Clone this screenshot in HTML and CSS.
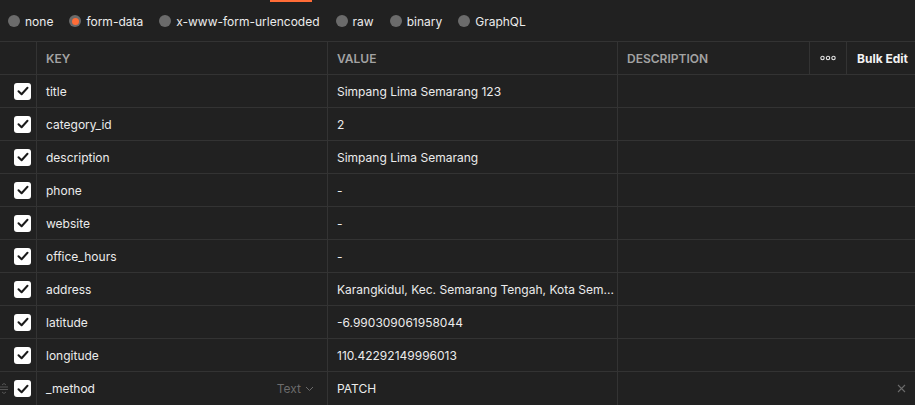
FILE: index.html
```html
<!DOCTYPE html>
<html>
<head>
<meta charset="utf-8">
<link rel="stylesheet" href="styles.css">
</head>
<body>
<div class="page">
  <div class="tabbar"><span class="tab-indicator"></span></div>
  <div class="radios">
    <label class="radio"><span class="dot"></span>none</label>
    <label class="radio"><span class="dot on"></span>form-data</label>
    <label class="radio"><span class="dot"></span>x-www-form-urlencoded</label>
    <label class="radio"><span class="dot"></span>raw</label>
    <label class="radio"><span class="dot"></span>binary</label>
    <label class="radio"><span class="dot"></span>GraphQL</label>
  </div>
  <div class="table">
    <div class="row head">
      <div class="cell chk"></div>
      <div class="cell key">KEY</div>
      <div class="cell val">VALUE</div>
      <div class="cell desc">DESCRIPTION</div>
      <div class="cell more"><svg width="16" height="6" viewBox="0 0 16 6"><circle cx="2.5" cy="3" r="1.7" fill="none" stroke="#e6e6e6" stroke-width="1.1"/><circle cx="8" cy="3" r="1.7" fill="none" stroke="#e6e6e6" stroke-width="1.1"/><circle cx="13.5" cy="3" r="1.7" fill="none" stroke="#e6e6e6" stroke-width="1.1"/></svg></div>
      <div class="cell bulk">Bulk Edit</div>
    </div>
    <div class="row"><div class="cell chk"><span class="box"><svg width="12" height="10" viewBox="0 0 12 10"><path d="M1.5 5.2 L4.6 8.2 L10.5 1.8" fill="none" stroke="#1a1a1a" stroke-width="2" stroke-linecap="round" stroke-linejoin="round"/></svg></span></div><div class="cell key">title</div><div class="cell val">Simpang Lima Semarang 123</div><div class="cell dspan"></div></div>
    <div class="row"><div class="cell chk"><span class="box"><svg width="12" height="10" viewBox="0 0 12 10"><path d="M1.5 5.2 L4.6 8.2 L10.5 1.8" fill="none" stroke="#1a1a1a" stroke-width="2" stroke-linecap="round" stroke-linejoin="round"/></svg></span></div><div class="cell key">category_id</div><div class="cell val">2</div><div class="cell dspan"></div></div>
    <div class="row"><div class="cell chk"><span class="box"><svg width="12" height="10" viewBox="0 0 12 10"><path d="M1.5 5.2 L4.6 8.2 L10.5 1.8" fill="none" stroke="#1a1a1a" stroke-width="2" stroke-linecap="round" stroke-linejoin="round"/></svg></span></div><div class="cell key">description</div><div class="cell val">Simpang Lima Semarang</div><div class="cell dspan"></div></div>
    <div class="row"><div class="cell chk"><span class="box"><svg width="12" height="10" viewBox="0 0 12 10"><path d="M1.5 5.2 L4.6 8.2 L10.5 1.8" fill="none" stroke="#1a1a1a" stroke-width="2" stroke-linecap="round" stroke-linejoin="round"/></svg></span></div><div class="cell key">phone</div><div class="cell val">-</div><div class="cell dspan"></div></div>
    <div class="row"><div class="cell chk"><span class="box"><svg width="12" height="10" viewBox="0 0 12 10"><path d="M1.5 5.2 L4.6 8.2 L10.5 1.8" fill="none" stroke="#1a1a1a" stroke-width="2" stroke-linecap="round" stroke-linejoin="round"/></svg></span></div><div class="cell key">website</div><div class="cell val">-</div><div class="cell dspan"></div></div>
    <div class="row"><div class="cell chk"><span class="box"><svg width="12" height="10" viewBox="0 0 12 10"><path d="M1.5 5.2 L4.6 8.2 L10.5 1.8" fill="none" stroke="#1a1a1a" stroke-width="2" stroke-linecap="round" stroke-linejoin="round"/></svg></span></div><div class="cell key">office_hours</div><div class="cell val">-</div><div class="cell dspan"></div></div>
    <div class="row"><div class="cell chk"><span class="box"><svg width="12" height="10" viewBox="0 0 12 10"><path d="M1.5 5.2 L4.6 8.2 L10.5 1.8" fill="none" stroke="#1a1a1a" stroke-width="2" stroke-linecap="round" stroke-linejoin="round"/></svg></span></div><div class="cell key">address</div><div class="cell val"><span class="ellip">Karangkidul, Kec. Semarang Tengah, Kota Sem...</span></div><div class="cell dspan"></div></div>
    <div class="row"><div class="cell chk"><span class="box"><svg width="12" height="10" viewBox="0 0 12 10"><path d="M1.5 5.2 L4.6 8.2 L10.5 1.8" fill="none" stroke="#1a1a1a" stroke-width="2" stroke-linecap="round" stroke-linejoin="round"/></svg></span></div><div class="cell key">latitude</div><div class="cell val">-6.990309061958044</div><div class="cell dspan"></div></div>
    <div class="row"><div class="cell chk"><span class="box"><svg width="12" height="10" viewBox="0 0 12 10"><path d="M1.5 5.2 L4.6 8.2 L10.5 1.8" fill="none" stroke="#1a1a1a" stroke-width="2" stroke-linecap="round" stroke-linejoin="round"/></svg></span></div><div class="cell key">longitude</div><div class="cell val">110.42292149996013</div><div class="cell dspan"></div></div>
    <div class="row last">
      <div class="cell chk">
        <svg class="drag" width="8" height="11" viewBox="0 0 8 11"><path d="M0 4h8M0 6.5h8" stroke="#555" stroke-width="1"/><path d="M2 2 L4 0.5 L6 2 M2 9 L4 10.5 L6 9" fill="none" stroke="#555" stroke-width="1"/></svg>
        <span class="box"><svg width="12" height="10" viewBox="0 0 12 10"><path d="M1.5 5.2 L4.6 8.2 L10.5 1.8" fill="none" stroke="#1a1a1a" stroke-width="2" stroke-linecap="round" stroke-linejoin="round"/></svg></span>
      </div>
      <div class="cell key"><span class="grow">_method</span><span class="type">Text<svg width="9" height="6" viewBox="0 0 9 6"><path d="M1 1 L4.5 4.5 L8 1" fill="none" stroke="#6b6b6b" stroke-width="1"/></svg></span></div>
      <div class="cell val">PATCH</div>
      <div class="cell dspan"><svg class="close" width="9" height="9" viewBox="0 0 9 9"><path d="M1 1 L8 8 M8 1 L1 8" stroke="#6b6b6b" stroke-width="1.1"/></svg></div>
    </div>
  </div>
</div>
</body>
</html>
```

FILE: styles.css
```css
* { box-sizing: border-box; }
html, body { margin: 0; padding: 0; background: #212121; }
body {
  font-family: Inter, "Noto Sans", sans-serif;
  font-size: 12px;
  color: #ececec;
  width: 915px;
  height: 405px;
  overflow: hidden;
}
.page { display: flex; flex-direction: column; }
.tabbar { height: 2px; position: relative; }
.tab-indicator {
  position: absolute; left: 270px; top: 0; width: 42px; height: 2px; background: #ff6c37;
}
.radios {
  height: 39px;
  display: flex;
  align-items: center;
  padding-left: 8px;
  gap: 16px;
  padding-bottom: 1px;
}
.radio { display: flex; align-items: center; gap: 5px; color: #ececec; }
.dot {
  width: 12px; height: 12px; border-radius: 50%;
  background: #6b6b6b; display: inline-flex; align-items: center; justify-content: center;
}
.dot.on::after {
  content: ""; width: 7px; height: 7px; border-radius: 50%; background: #ff6c37;
}
.table { border-top: 1px solid #333; }
.row {
  display: grid;
  grid-template-columns: 37px 291px 290px 192px 37px 68px;
  height: 33px;
  border-bottom: 1px solid #333;
}
.row.last { border-bottom: none; }
.cell {
  border-right: 1px solid #333;
  display: flex;
  align-items: center;
  min-width: 0;
}
.head .cell { color: #a3a3a3; font-weight: 600; }
.head .more { justify-content: center; }
.head .bulk { color: #f2f2f2; font-weight: 700; padding-left: 10px; border-right: none; white-space: nowrap; }
.key { padding-left: 9px; }
.val { padding-left: 9px; }
.desc { padding-left: 9px; }
.dspan { grid-column: 4 / 7; border-right: none; justify-content: flex-end; padding-right: 9px; }
.chk { justify-content: flex-start; padding-left: 14px; position: relative; }
.box {
  width: 17px; height: 17px; border-radius: 3px; background: #fff;
  display: inline-flex; align-items: center; justify-content: center;
}
.drag { position: absolute; left: 0; top: 11px; }
.ellip { white-space: nowrap; display: block; }
.grow { flex: 1; }
.type { color: #6b6b6b; display: flex; align-items: center; gap: 4px; padding-right: 13px; }
```
